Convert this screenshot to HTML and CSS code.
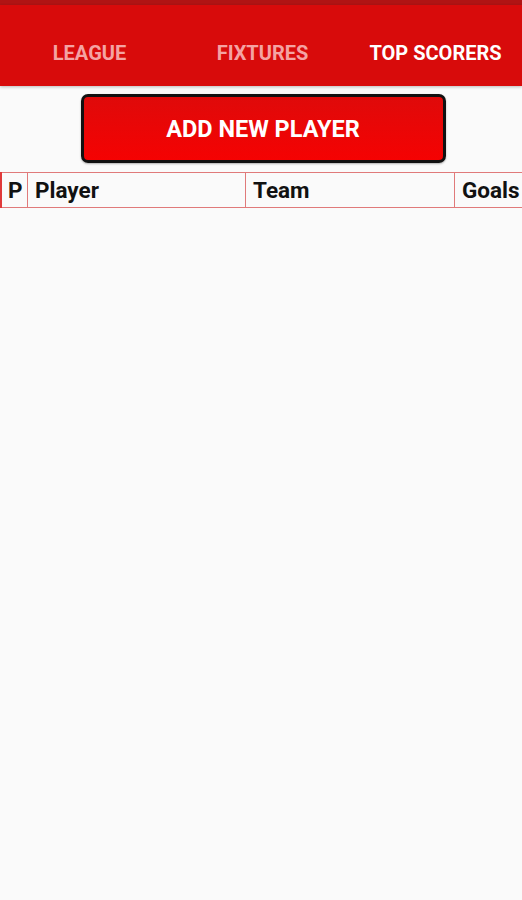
FILE: index.html
```html
<!DOCTYPE html>
<html lang="en">
<head>
    <meta charset="UTF-8">
    <meta name="viewport" content="width=device-width, initial-scale=1.0">
    <title>Top Scorers</title>
    <link rel="stylesheet" href="styles.css">
</head>
<body>
    <div class="statusbar"></div>
    <div class="tabs">
        <div class="tab">LEAGUE</div>
        <div class="tab">FIXTURES</div>
        <div class="tab active">TOP SCORERS</div>
    </div>
    <div class="actions">
        <button class="add_button">ADD NEW PLAYER</button>
    </div>
    <table class="scorers">
        <tr>
            <th class="pos">P</th>
            <th class="player">Player</th>
            <th class="team">Team</th>
            <th class="goals">Goals</th>
        </tr>
    </table>
</body>
</html>
```

FILE: styles.css
```css
body {
    font-family: Roboto, "Noto Sans", Arial, sans-serif;
    background-color: #fafafa;
    color: #111;
    margin: 0;
    padding: 0;
    overflow: hidden;
}
.statusbar {
    height: 5px;
    background-color: #b01414;
}
.tabs {
    display: flex;
    height: 81px;
    padding-left: 3px;
    background-color: #d80b0b;
    box-shadow: 0 1px 3px rgba(0, 0, 0, 0.25);
}
.tab {
    flex: 1;
    text-align: center;
    padding-top: 36px;
    font-size: 20px;
    font-weight: bold;
    color: #f4a3a3;
}
.tab.active {
    color: #fff;
}
.actions {
    display: flex;
    justify-content: center;
    padding-top: 8px;
    padding-left: 4px;
}
.add_button {
    width: 365px;
    height: 69px;
    border: 3px solid #111;
    border-radius: 7px;
    background: linear-gradient(#df0a0a, #f50202);
    color: #fff;
    font-family: Roboto, Arial, sans-serif;
    font-size: 23.5px;
    font-weight: bold;
    box-shadow: 0 1px 2px rgba(0, 0, 0, 0.3);
}
.scorers {
    margin-top: 9px;
    border-collapse: collapse;
    width: 540px;
}
.scorers th {
    height: 34px;
    padding: 0 0 0 7px;
    text-align: left;
    font-size: 22.5px;
    font-weight: bold;
    color: #111;
    border: 1px solid #e07a7a;
}
.scorers th.pos {
    width: 19px;
    padding-left: 6px;
    border-left: 2px solid #e03a3a;
}
.scorers th.player {
    width: 210px;
}
.scorers th.team {
    width: 201px;
}
```
